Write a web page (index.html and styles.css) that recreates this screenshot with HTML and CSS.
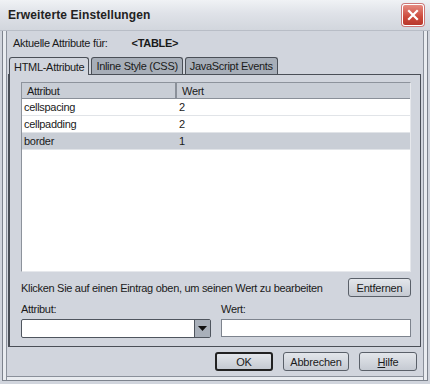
FILE: index.html
```html
<!DOCTYPE html>
<html lang="de">
<head>
  <meta charset="UTF-8" />
  <title>Erweiterte Einstellungen</title>
  <link rel="stylesheet" href="styles.css">
</head>
<body>
  <div class="window">
    <div class="titlebar">
      <span class="title">Erweiterte Einstellungen</span>
      <div class="close">
        <svg width="12" height="12" viewBox="0 0 12 12">
          <path d="M2 2 L10 10 M10 2 L2 10" stroke="#fff" stroke-width="2.2" stroke-linecap="square"/>
        </svg>
      </div>
    </div>

    <div class="content">
      <div class="current">
        <span>Aktuelle Attribute für:</span>
        <span class="tag">&lt;TABLE&gt;</span>
      </div>

      <div class="tabs">
        <div class="tab active">HTML-Attribute</div>
        <div class="tab">Inline Style (CSS)</div>
        <div class="tab">JavaScript Events</div>
      </div>

      <div class="panel">
        <div class="list">
          <div class="row head">
            <div class="cell name">Attribut</div>
            <div class="cell value">Wert</div>
          </div>
          <div class="row">
            <div class="cell name">cellspacing</div>
            <div class="cell value">2</div>
          </div>
          <div class="row">
            <div class="cell name">cellpadding</div>
            <div class="cell value">2</div>
          </div>
          <div class="row selected">
            <div class="cell name">border</div>
            <div class="cell value">1</div>
          </div>
        </div>

        <div class="hint">
          <span>Klicken Sie auf einen Eintrag oben, um seinen Wert zu bearbeiten</span>
          <button class="btn remove">Entfernen</button>
        </div>

        <div class="fields">
          <div class="field">
            <label>Attribut:</label>
            <div class="combo">
              <div class="combo-text"></div>
              <div class="combo-arrow">
                <svg width="9" height="5" viewBox="0 0 9 5"><path d="M0 0 H9 L4.5 5 Z" fill="#111"/></svg>
              </div>
            </div>
          </div>
          <div class="field">
            <label>Wert:</label>
            <div class="input"></div>
          </div>
        </div>
      </div>

      <div class="buttons">
        <button class="btn default">OK</button>
        <button class="btn">Abbrechen</button>
        <button class="btn"><u>H</u>ilfe</button>
      </div>
    </div>
  </div>
</body>
</html>
```

FILE: styles.css
```css
body {
  margin: 0;
  font-family: "Liberation Sans", Arial, sans-serif;
  font-size: 11px;
  letter-spacing: -0.3px;
  color: #1a1a1a;
  background: #9aa1ab;
}
.window {
  width: 430px;
  height: 384px;
  display: flex;
  flex-direction: column;
  background: #d1d5dd;
  box-sizing: border-box;
}
.titlebar {
  height: 30px;
  display: flex;
  align-items: center;
  justify-content: space-between;
  padding: 0 6px 0 8px;
  background: linear-gradient(#f0f2f5, #dfe2e8 45%, #d2d6dd);
  border-bottom: 1px solid #b8bdc6;
}
.title {
  font-weight: bold;
  font-size: 12px;
  letter-spacing: 0.1px;
  color: #222;
}
.close {
  width: 20px;
  height: 20px;
  border-radius: 3px;
  border: 1px solid #fff;
  background: linear-gradient(#e58a80, #cc4a3c 60%, #b8382c);
  display: flex;
  align-items: center;
  justify-content: center;
  box-shadow: 0 0 0 1px #c77;
}
.content {
  flex: 1;
  margin: 0 2px 3px 2px;
  border: 1px solid #7d838d;
  border-top: none;
  box-shadow: inset 3px 0 0 #e9ecf0, inset -3px 0 0 #e9ecf0, inset 4px 0 0 #8a909a, inset -4px 0 0 #8a909a, inset 0 -3px 0 #e9ecf0, inset 0 -4px 0 #8a909a;
  display: flex;
  flex-direction: column;
  padding: 4px 6px 0 5px;
}
.current {
  display: flex;
  gap: 24px;
  padding-left: 5px;
  height: 16px;
  align-items: center;
}
.tag {
  font-weight: bold;
}
.tabs {
  display: flex;
  gap: 2px;
  margin-top: 6px;
  padding-left: 1px;
  height: 17px;
}
.tab {
  border: 1px solid #4a4f57;
  border-bottom: none;
  border-radius: 3px 3px 0 0;
  padding: 0 4px;
  display: flex;
  align-items: center;
  background: #a7aeb8;
}
.tab.active {
  background: #d1d5dd;
  position: relative;
  z-index: 1;
  margin-bottom: -1px;
}
.panel {
  box-sizing: border-box;
  border: 1px solid #4a4f57;
  border-left-width: 2px;
  height: 273px;
  padding: 7px 9px 0 11px;
  display: flex;
  flex-direction: column;
}
.list {
  height: 188px;
  background: #fff;
  border: 1px solid #8d939c;
  border-right-color: #e6e8ec;
  border-bottom-color: #e6e8ec;
}
.row {
  display: flex;
  height: 16px;
  align-items: center;
  border-bottom: 1px solid #e1e4e8;
}
.row.head {
  height: 15px;
  background: #c9ced6;
  border-bottom: 1px solid #8a9099;
}
.row.head .cell {
  padding-left: 5px;
}
.row.head .name {
  border-right: 2px solid #8a9099;
  height: 100%;
  display: flex;
  align-items: center;
}
.row.selected {
  background: #c9ced6;
}
.cell {
  padding-left: 2px;
  box-sizing: border-box;
}
.name {
  width: 155px;
}
.value {
  flex: 1;
}
.hint {
  display: flex;
  align-items: center;
  justify-content: space-between;
  margin-top: 6px;
  height: 19px;
}
.btn {
  font-family: inherit;
  font-size: 11px;
  letter-spacing: -0.2px;
  color: #1a1a1a;
  height: 19px;
  border: 1px solid #5a6069;
  border-radius: 3px;
  background: linear-gradient(#e3e6eb, #c5cad2);
  padding: 0;
}
.remove {
  width: 63px;
}
.fields {
  display: flex;
  gap: 10px;
  margin-top: 6px;
}
.field {
  display: flex;
  flex-direction: column;
  gap: 3px;
}
.field label {
  height: 13px;
  line-height: 13px;
}
.field:first-child {
  width: 190px;
}
.field:last-child {
  flex: 1;
}
.combo {
  height: 17px;
  display: flex;
  border: 1px solid #4f555e;
  border-radius: 2px;
  background: #fff;
}
.combo-text {
  flex: 1;
}
.combo-arrow {
  width: 15px;
  background: #a9b0ba;
  border-left: 1px solid #4f555e;
  display: flex;
  align-items: center;
  justify-content: center;
}
.input {
  height: 16px;
  border: 1px solid #7d838d;
  background: #fff;
}
.buttons {
  display: flex;
  justify-content: flex-end;
  gap: 10px;
  margin-top: 5px;
  padding-right: 4px;
}
.buttons .btn {
  width: 58px;
}
.buttons .btn:nth-child(2) {
  width: 66px;
}
.btn.default {
  border: 2px solid #222;
}
```
